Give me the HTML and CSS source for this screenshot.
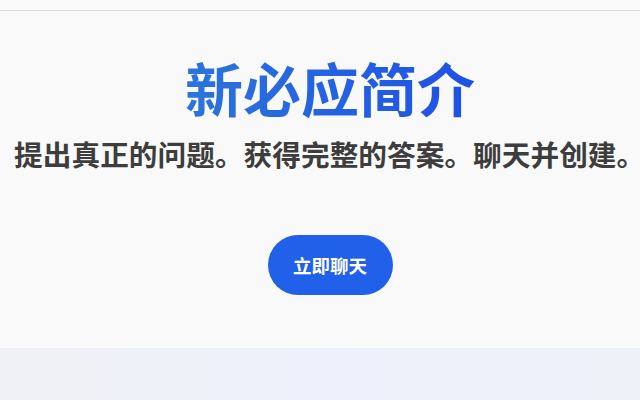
FILE: index.html
```html
<!DOCTYPE html>
<html lang="zh-CN">
<head>
    <meta charset="UTF-8">
    <meta name="viewport" content="width=device-width, initial-scale=1.0">
    <title>新必应简介</title>
    <link rel="stylesheet" href="styles.css">
</head>
<body>
    <header class="topbar"></header>

    <!-- Hero -->
    <section class="hero">
        <h1 class="hero-title">新必应简介</h1>
        <p class="hero-sub">提出真正的问题。获得完整的答案。聊天并创建<span class="half">。</span></p>
        <a class="btn" href="#">立即聊天</a>
    </section>

    <section class="band"></section>
</body>
</html>
```

FILE: styles.css
```css
/* Basic Styles */
body {
    font-family: 'Noto Sans CJK SC', 'Noto Sans', sans-serif;
    background: #f9f9f9;
    margin: 0;
    padding: 0;
    overflow-x: hidden;
}

.topbar {
    height: 10px;
    border-bottom: 1px solid #dcdcdc;
    background: #f9f9f9;
}

.hero {
    display: flex;
    flex-direction: column;
    align-items: center;
    height: 337px;
    padding-left: 20px;
    box-sizing: border-box;
}

.hero-title {
    margin: 39px 0 0;
    font-size: 58px;
    font-weight: 700;
    line-height: 1.3;
    background: linear-gradient(90deg, #2b74dc, #1e50e8);
    -webkit-background-clip: text;
    background-clip: text;
    color: transparent;
}

.hero-sub {
    margin: 10px 0 0 -15px;
    font-size: 28.7px;
    font-weight: 700;
    line-height: 1.3;
    color: #3d3d3d;
    white-space: nowrap;
}

.half {
    font-feature-settings: "halt";
}

.btn {
    display: inline-flex;
    align-items: center;
    justify-content: center;
    margin-top: 62px;
    width: 125px;
    height: 60px;
    border-radius: 30px;
    background: #2160e8;
    color: #fff;
    font-size: 18.5px;
    font-weight: 700;
    text-decoration: none;
}

.band {
    height: 60px;
    background: linear-gradient(90deg, #eff0f5, #edf0fa 50%, #eef0f8);
}
```
